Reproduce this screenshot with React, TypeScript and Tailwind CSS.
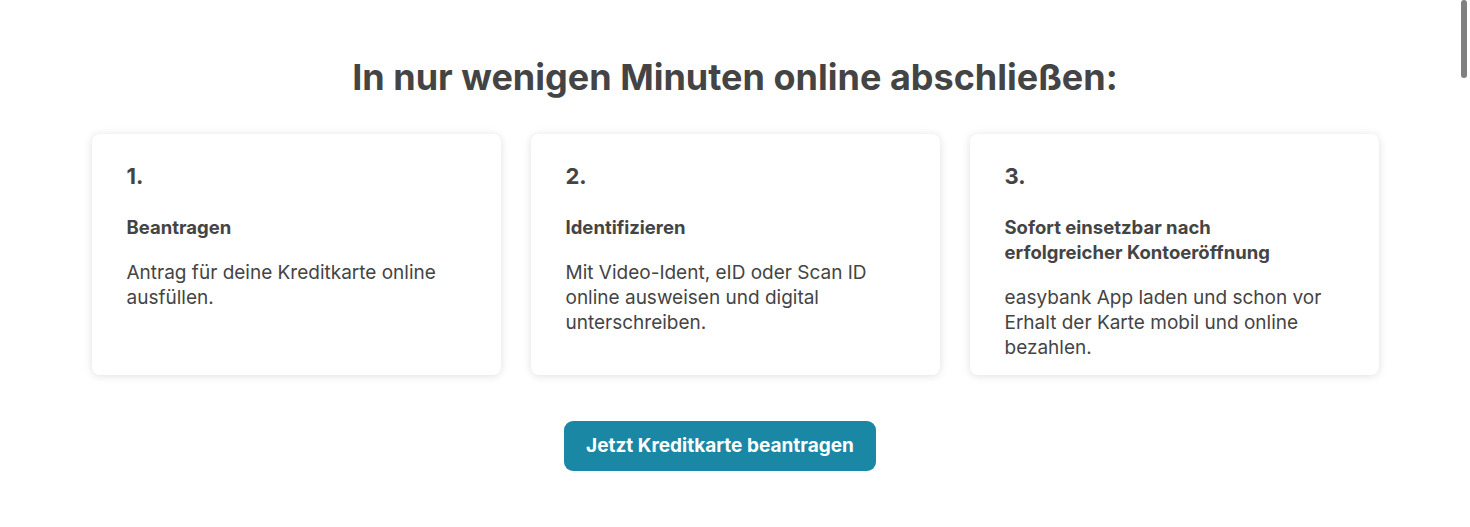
import React from "react";

const steps = [
  { n: "1.", title: "Beantragen", body: "Antrag für deine Kreditkarte online ausfüllen." },
  { n: "2.", title: "Identifizieren", body: "Mit Video-Ident, eID oder Scan ID online ausweisen und digital unterschreiben." },
  { n: "3.", title: "Sofort einsetzbar nach erfolgreicher Kontoeröffnung", body: "easybank App laden und schon vor Erhalt der Karte mobil und online bezahlen." },
];

export default function App() {
  return (
    <div className="relative w-full h-[527px] bg-white overflow-hidden text-[#444444]" style={{ fontFamily: "Inter, 'Noto Sans', sans-serif" }}>
      <div className="absolute right-[3px] top-0 w-[6px] h-[78px] rounded-full bg-[#808080]" />
      <div className="flex flex-col items-center pt-[55px]">
        <h1 className="text-[36px] leading-[44px] font-bold">In nur wenigen Minuten online abschließen:</h1>
        <div className="mt-[35px] flex gap-[30px]">
          {steps.map((s) => (
            <div key={s.n} className="w-[409px] h-[241px] bg-white rounded-[8px] shadow-[0_1px_8px_rgba(0,0,0,0.13)] pl-[35px] pr-[44px] pt-[27px]">
              <div className="text-[22px] leading-[30px] font-bold">{s.n}</div>
              <div className="mt-[24px] text-[18.5px] leading-[25px] font-bold pr-[10px]">{s.title}</div>
              <p className="mt-[20px] text-[19px] leading-[25px]">{s.body}</p>
            </div>
          ))}
        </div>
        <button className="mt-[46px] mr-[30px] w-[312px] h-[50px] rounded-[9px] bg-[#1a87a5] text-white text-[19px] font-bold">Jetzt Kreditkarte beantragen</button>
      </div>
    </div>
  );
}
